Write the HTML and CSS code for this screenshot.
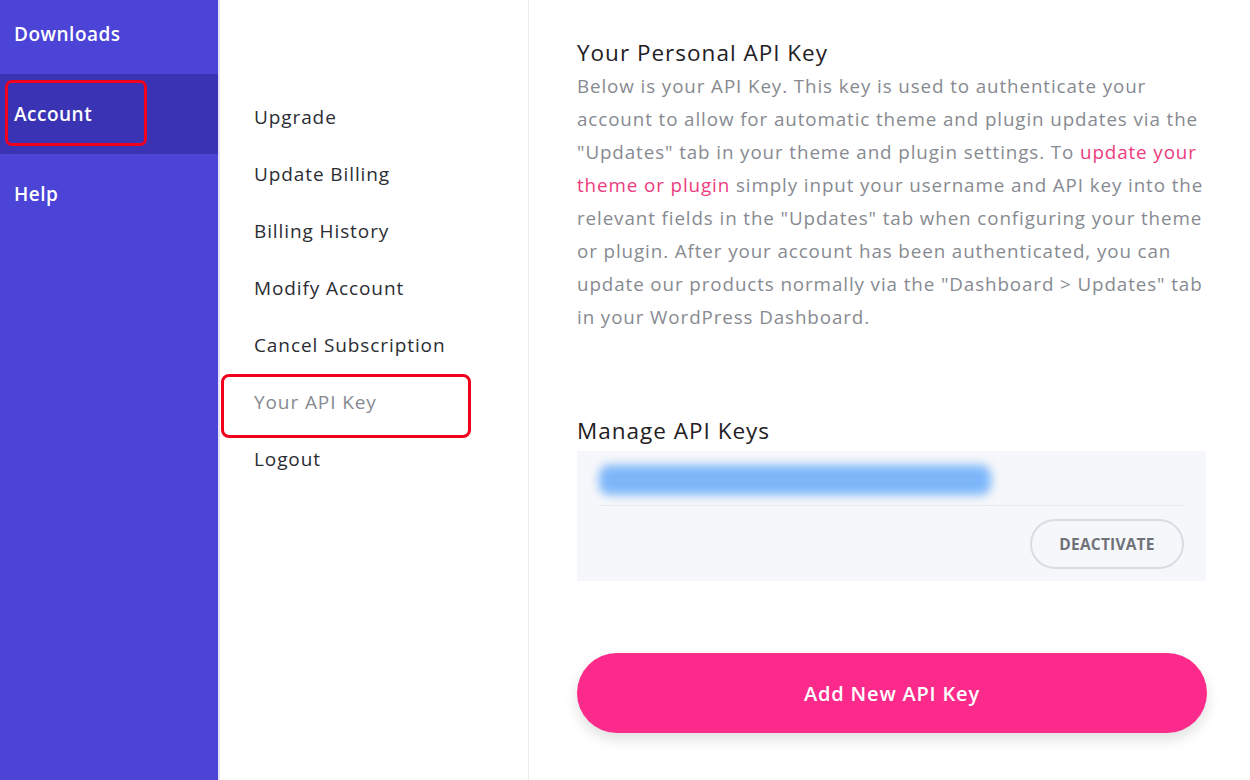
FILE: index.html
```html
<!DOCTYPE html>
<html lang="en">
<head>
  <meta charset="UTF-8">
  <title>Account – Your API Key</title>
  <link rel="stylesheet" href="styles.css">
</head>
<body>
  <div class="page">
    <nav class="sidebar">
      <a class="side-item first" href="#">Downloads</a>
      <a class="side-item active" href="#">Account<span class="mark mark-side"></span></a>
      <a class="side-item" href="#">Help</a>
    </nav>
    <nav class="subnav">
      <a class="sub-item" href="#">Upgrade</a>
      <a class="sub-item" href="#">Update Billing</a>
      <a class="sub-item" href="#">Billing History</a>
      <a class="sub-item" href="#">Modify Account</a>
      <a class="sub-item" href="#">Cancel Subscription</a>
      <a class="sub-item current" href="#">Your API Key<span class="mark mark-sub"></span></a>
      <a class="sub-item" href="#">Logout</a>
    </nav>
    <main class="content">
      <h2>Your Personal API Key</h2>
      <p class="intro">Below is your API Key. This key is used to authenticate your<br>
        account to allow for automatic theme and plugin updates via the<br>
        "Updates" tab in your theme and plugin settings. To <a href="#">update your<br>
        theme or plugin</a> simply input your username and API key into the<br>
        relevant fields in the "Updates" tab when configuring your theme<br>
        or plugin. After your account has been authenticated, you can<br>
        update our products normally via the "Dashboard &gt; Updates" tab<br>
        in your WordPress Dashboard.</p>

      <h2 class="manage">Manage API Keys</h2>
      <div class="keys">
        <div class="key-row"><span class="key-blur"></span></div>
        <div class="key-actions">
          <button class="btn-deactivate">DEACTIVATE</button>
        </div>
      </div>

      <button class="btn-add">Add New API Key</button>
    </main>
  </div>
</body>
</html>
```

FILE: styles.css
```css
:root { --violet: #4b44d6; --violet-dark: #3a33b4; --rose: #fb2a8b; --gris: #878a91; --texte: #2b2d33; }
* { box-sizing: border-box; }
html, body { margin:0; padding:0; height:100%; overflow:hidden; }
body { font-family:"Open Sans", "Noto Sans", sans-serif; background:#fff; color:var(--texte); }
a { text-decoration:none; color:inherit; }
.page { display:flex; height:780px; }

.sidebar { width:218px; flex:0 0 218px; background:var(--violet); display:flex; flex-direction:column; }
.side-item { position:relative; display:flex; align-items:center; height:80px; padding-left:14px;
  color:#fff; font-size:19px; font-weight:600; letter-spacing:0.5px; }
.side-item.first { margin-top:-6px; }
.side-item.active { background:var(--violet-dark); }

.mark { position:absolute; border:3px solid #f0001c; border-radius:7px; pointer-events:none; }
.mark-side { left:5px; top:6px; width:142px; height:66px; }
.mark-sub { left:1px; top:-28px; width:250px; height:64px; border-radius:8px; }

.subnav { width:311px; flex:0 0 311px; border-right:1px solid #ececf0; border-left:2px solid #e6e4fb;
  display:flex; flex-direction:column; padding-top:117px; }
.sub-item { position:relative; display:block; height:57px; line-height:0; padding-left:34px;
  font-size:19px; letter-spacing:0.9px; color:var(--texte); }
.sub-item.current { color:var(--gris); }

.content { flex:1; padding:38px 44px 0 48px; }
.content h2 { margin:0; font-size:22.5px; font-weight:400; color:#1f2024; line-height:30px; letter-spacing:1px; }
.intro { margin:2px 0 0; font-size:18.8px; letter-spacing:0.9px; line-height:33px; color:var(--gris); white-space:nowrap; }
.intro a { color:#ec3b7e; }
.content h2.manage { margin-top:82px; }

.keys { margin-top:5px; width:629px; height:130px; background:#f6f7fa; padding:0 22px; }
.key-row { height:55px; border-bottom:1px solid #e8eaef; padding-top:14px; }
.key-blur { display:block; width:392px; height:30px; background:#7db7fa; border-radius:10px; filter:blur(5px); }
.key-actions { display:flex; justify-content:flex-end; padding-top:13px; }
.btn-deactivate { width:154px; height:50px; border:2px solid #dadce2; border-radius:25px; background:transparent;
  font-family:inherit; font-size:15.5px; font-weight:700; color:#6f7279; letter-spacing:0.2px; }

.btn-add { display:block; margin-top:72px; width:630px; height:80px; border:none; border-radius:40px;
  background:var(--rose); color:#fff; font-family:inherit; font-size:20px; font-weight:600; letter-spacing:0.8px;
  box-shadow:0 6px 14px rgba(0,0,0,0.13); }
```
